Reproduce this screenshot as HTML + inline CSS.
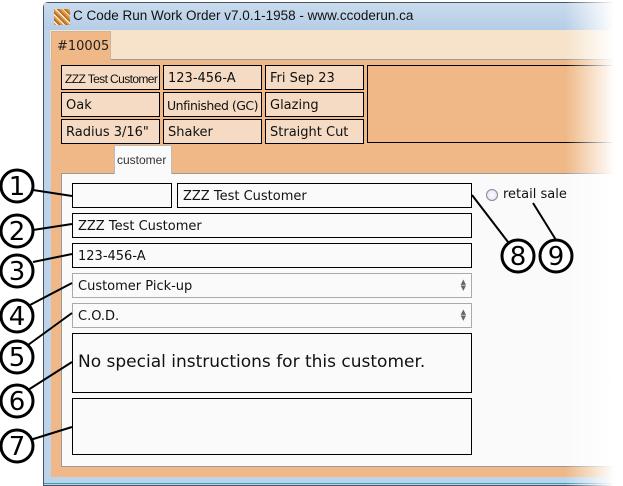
<!DOCTYPE html>
<html><head><style>
*{margin:0;padding:0;box-sizing:border-box}
body{width:623px;height:486px;background:#fff;position:relative;overflow:hidden;font-family:"DejaVu Sans","Liberation Sans",sans-serif}
.a{position:absolute}
.win{left:43px;top:2px;width:600px;height:484px;border:1px solid #4a5460;border-radius:5px 0 0 0;background:#bcd3ea}
.title{left:52px;top:8px;font-family:"Liberation Sans",sans-serif;font-size:13.5px;color:#111}
.tabs{left:50px;top:30px;width:580px;height:30px;background:#f6e3ca}
.tab{left:51px;top:31px;width:60px;height:29px;background:#efb886;border:1px solid #c8b8a0;border-bottom:none;font-size:13px;padding:7px 0 0 5px;color:#222}
.panel{left:51px;top:59px;width:580px;height:418px;background:#efb886;border-top:1px solid #999}
.c{position:absolute;background:#f5dbc3;border:1px solid #000;height:25px;font-size:13px;padding:5px 0 0 4px;color:#111;white-space:nowrap;overflow:hidden}
.content{left:61px;top:173px;width:570px;height:294px;background:#fafafa;border:1px solid #999}
.sub{left:114px;top:145px;width:58px;height:29px;background:#fafafa;border:1px solid #bbb;border-bottom:none;font-size:12px;padding:7px 0 0 2px;color:#333;font-family:"Liberation Sans",sans-serif}
.f{position:absolute;border:1px solid #000;background:#fafafa;font-size:13px;padding:5px 0 0 5px;color:#111}
.s{border-color:#aaa}
.fade{left:565px;top:0;width:58px;height:486px;background:linear-gradient(to right,rgba(255,255,255,0),#fff 85%)}
.arr{position:absolute;right:5px;top:5px;font-size:7px;line-height:6px;color:#666}
</style></head><body>
<div class="a win"></div>
<div class="a" style="left:44px;top:3px;width:580px;height:27px;background:linear-gradient(#c9dbee,#b5cde6)"></div>
<div class="a" style="left:54px;top:9px;width:16px;height:16px;background:repeating-linear-gradient(45deg,#d9a050 0 2px,#fff 2px 3px,#c07020 3px 5px)"></div>
<div class="a title" style="left:73px">C Code Run Work Order v7.0.1-1958 - www.ccoderun.ca</div>
<div class="a tabs"></div>
<div class="a panel"></div>
<div class="a tab">#10005</div>
<div class="c" style="left:61px;top:65px;width:99px;font-family:'Liberation Sans',sans-serif;font-size:12px;letter-spacing:-0.6px;padding:6px 0 0 3px">ZZZ Test Customer</div>
<div class="c" style="left:163px;top:65px;width:99px">123-456-A</div>
<div class="c" style="left:265px;top:65px;width:99px">Fri Sep 23</div>
<div class="c" style="left:367px;top:65px;width:260px;height:78px;background:#efb886"></div>
<div class="c" style="left:61px;top:92px;width:99px">Oak</div>
<div class="c" style="left:163px;top:92px;width:99px;font-size:12.5px;letter-spacing:-0.5px;padding-left:3px">Unfinished (GC)</div>
<div class="c" style="left:265px;top:92px;width:99px">Glazing</div>
<div class="c" style="left:61px;top:119px;width:99px">Radius 3/16"</div>
<div class="c" style="left:163px;top:119px;width:99px">Shaker</div>
<div class="c" style="left:265px;top:119px;width:99px">Straight Cut</div>
<div class="a content"></div>
<div class="a sub">customer</div>
<div class="a" style="left:44px;top:478px;width:590px;height:6px;background:#bcd3ea;border-bottom:1px solid #2aa0c0"></div>
<div class="f" style="left:72px;top:183px;width:100px;height:25px"></div>
<div class="f" style="left:177px;top:183px;width:295px;height:25px">ZZZ Test Customer</div>
<div class="f" style="left:72px;top:213px;width:400px;height:25px">ZZZ Test Customer</div>
<div class="f" style="left:72px;top:243px;width:400px;height:25px">123-456-A</div>
<div class="f s" style="left:72px;top:273px;width:400px;height:25px">Customer Pick-up<span class="arr">▲<br>▼</span></div>
<div class="f s" style="left:72px;top:303px;width:400px;height:25px">C.O.D.<span class="arr">▲<br>▼</span></div>
<div class="f" style="left:72px;top:333px;width:400px;height:60px;font-size:17px;padding:18px 0 0 5px">No special instructions for this customer.</div>
<div class="f" style="left:72px;top:398px;width:400px;height:57px"></div>
<div class="a" style="left:486px;top:189px;width:12px;height:12px;border-radius:50%;border:1px solid #889;background:radial-gradient(#fff,#d8dcf0)"></div>
<div class="a" style="left:503px;top:187px;font-size:13px;color:#111">retail sale</div>
<div class="a fade"></div>
<svg class="a" style="left:0;top:0" width="623" height="486">
<g stroke="#000" stroke-width="2" fill="none">
<path d="M33 190L72 196M33 230L72 224M33 262L72 254M30 305L72 283M28 345L72 313M28 390L72 362M30 440L72 427M472 195L508 242M533 203L556 240"/>
</g>
<g stroke="#000" stroke-width="3" fill="#fff">
<circle cx="17" cy="186" r="16"/><circle cx="17" cy="231" r="16"/><circle cx="17" cy="271" r="16"/><circle cx="17" cy="316" r="16"/><circle cx="17" cy="357" r="16"/><circle cx="17" cy="401" r="16"/><circle cx="17" cy="446" r="16"/><circle cx="518" cy="256" r="16"/><circle cx="556" cy="256" r="16"/>
</g>
<g font-family="DejaVu Sans" font-size="26" text-anchor="middle" fill="#000">
<text x="17" y="195">1</text><text x="17" y="240">2</text><text x="17" y="280">3</text><text x="17" y="325">4</text><text x="17" y="366">5</text><text x="17" y="410">6</text><text x="17" y="455">7</text><text x="518" y="265">8</text><text x="556" y="265">9</text>
</g>
</svg>
</body></html>
